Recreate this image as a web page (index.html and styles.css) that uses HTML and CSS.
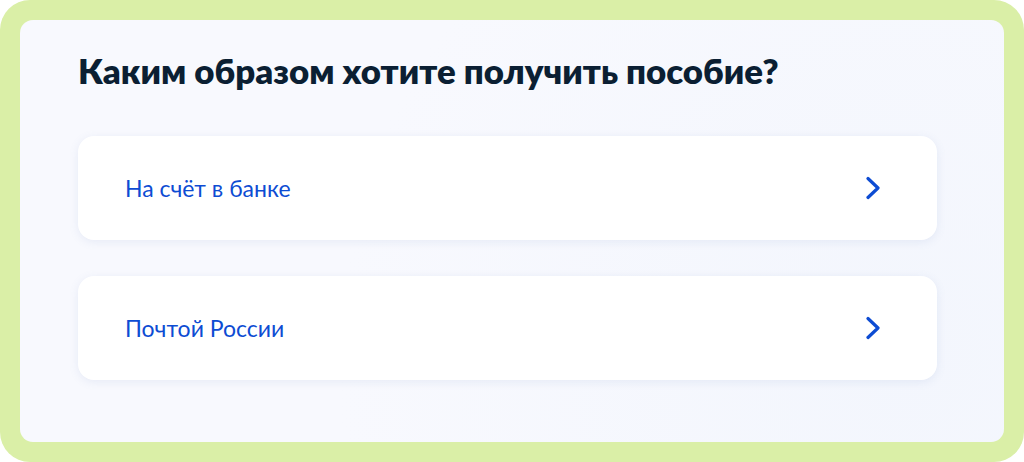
FILE: index.html
```html
<!doctype html>
<html lang="ru">
  <head>
    <meta charset="UTF-8" />
    <meta name="viewport" content="width=device-width, initial-scale=1.0" />
    <title>Способ получения пособия</title>
    <link rel="stylesheet" href="styles.css">
  </head>
  <body>
    <div class="frame">
      <div class="panel">
        <h1>Каким образом хотите получить пособие?</h1>

        <div class="options">
          <a class="option" href="#">
            <span>На счёт в банке</span>
            <svg class="chevron" viewBox="0 0 14 24" width="14" height="24">
              <path d="M2 2.5 L12 12 L2 21.5" />
            </svg>
          </a>
          <a class="option" href="#">
            <span>Почтой России</span>
            <svg class="chevron" viewBox="0 0 14 24" width="14" height="24">
              <path d="M2 2.5 L12 12 L2 21.5" />
            </svg>
          </a>
        </div>
      </div>
    </div>
  </body>
</html>
```

FILE: styles.css
```css
body {
  margin: 0;
  background: #ffffff;
  font-family: Lato, 'Open Sans', sans-serif;
}

.frame {
  height: 462px;
  box-sizing: border-box;
  padding: 20px;
  background: #daefa7;
  border-radius: 30px;
}

.panel {
  height: 100%;
  box-sizing: border-box;
  padding: 27px 67px 0 58px;
  background: radial-gradient(circle at 90% 80%, #f3f6fd, #f8f9fe 60%);
  border-radius: 13px;
}

.panel h1 {
  margin: 0;
  color: #0b1f33;
  font-size: 34.8px;
  font-weight: 800;
  line-height: 48px;
}

.options {
  display: flex;
  flex-direction: column;
  gap: 36px;
  margin-top: 41px;
}

.option {
  display: flex;
  align-items: center;
  justify-content: space-between;
  height: 104px;
  padding: 0 57px 0 47px;
  background: #ffffff;
  border-radius: 16px;
  box-shadow: 0 2px 10px rgba(110, 130, 190, 0.12);
  color: #0d4cd3;
  font-size: 23px;
  text-decoration: none;
}

.chevron path {
  fill: none;
  stroke: #0d4cd3;
  stroke-width: 3.2;
  stroke-linecap: round;
  stroke-linejoin: round;
}
```
